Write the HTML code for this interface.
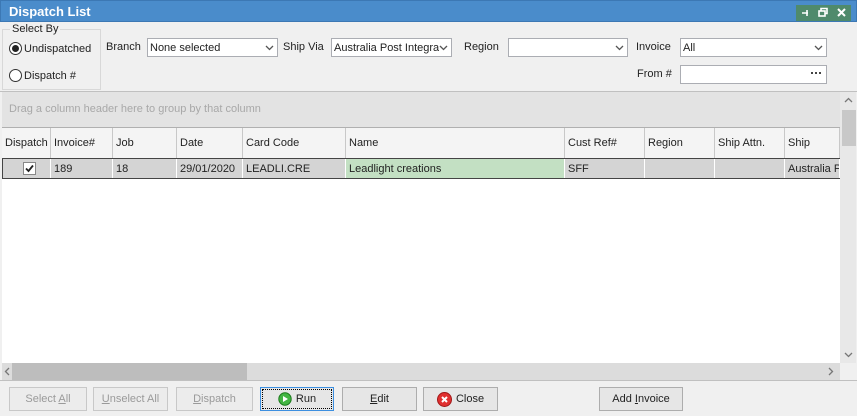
<!DOCTYPE html>
<html><head><style>
*{box-sizing:border-box;margin:0;padding:0}
body{width:857px;height:416px;overflow:hidden;background:#f0f0f0;font-family:"Liberation Sans",sans-serif;font-size:11px;color:#222;position:relative}
.a{position:absolute}
.title{left:0;top:0;width:857px;height:22px;background:#4a8ccb;color:#fff;font-weight:bold;font-size:13px;padding:3px 0 0 8px;border:1px solid #3c78b4}
.combo{background:#fff;border:1px solid #abadb3;height:19px;padding:3px 0 0 2px;white-space:nowrap;overflow:hidden}
.combo svg{position:absolute;right:3px;top:6px;background:#fff}
.btn{border:1px solid #adadad;background:#e6e6e6;height:24px;display:flex;align-items:center;justify-content:center;gap:4px;font-size:11px}
.dis{color:#9a9a9a;border-color:#c8c8c8;background:#ececec}
.hd{top:128px;height:31px;padding:9px 0 0 3px;border-right:1px solid #c8c8c8;background:#f4f4f4}
.cell{top:159px;height:19px;padding:4px 0 0 3px;border-right:1px solid #fff;background:#d4d4d4;white-space:nowrap;overflow:hidden}
</style></head><body>
<div class="a title">Dispatch List</div>
<div class="a" style="left:796px;top:5px;width:55px;height:16px;background:#4f8a6c"></div>
<svg class="a" style="left:796px;top:5px" width="55" height="16" fill="none" stroke="#fff" stroke-width="1.6">
<path d="M6 8h6M11 5v6"/><rect x="23" y="6" width="6" height="5"/><path d="M25 6V3.5h6v5h-2"/><path d="M42 4l7 7M49 4l-7 7" stroke-width="2"/></svg>

<div class="a" style="left:2px;top:29px;width:99px;height:61px;border:1px solid #d8d8d8"></div>
<div class="a" style="left:10px;top:23px;background:#f0f0f0;padding:0 2px">Select By</div>
<div class="a" style="left:9px;top:42px;width:13px;height:13px;border:1px solid #333;border-radius:50%;background:#fff"><div style="margin:2px;width:7px;height:7px;border-radius:50%;background:#222"></div></div>
<div class="a" style="left:24px;top:43px">Undispatched</div>
<div class="a" style="left:9px;top:69px;width:13px;height:13px;border:1px solid #333;border-radius:50%;background:#fff"></div>
<div class="a" style="left:24px;top:70px">Dispatch #</div>

<div class="a" style="left:106px;top:41px">Branch</div>
<div class="a combo" style="left:147px;top:38px;width:131px">None selected<svg width="9" height="6"><path d="M1 1l3.5 3.5L8 1" stroke="#555" fill="none" stroke-width="1.3"/></svg></div>
<div class="a" style="left:283px;top:41px">Ship Via</div>
<div class="a combo" style="left:331px;top:38px;width:121px">Australia Post Integra<svg width="9" height="6"><path d="M1 1l3.5 3.5L8 1" stroke="#555" fill="none" stroke-width="1.3"/></svg></div>
<div class="a" style="left:464px;top:41px">Region</div>
<div class="a combo" style="left:508px;top:38px;width:120px"><svg width="9" height="6"><path d="M1 1l3.5 3.5L8 1" stroke="#555" fill="none" stroke-width="1.3"/></svg></div>
<div class="a" style="left:636px;top:41px">Invoice</div>
<div class="a combo" style="left:680px;top:38px;width:147px">All<svg width="9" height="6"><path d="M1 1l3.5 3.5L8 1" stroke="#555" fill="none" stroke-width="1.3"/></svg></div>
<div class="a" style="left:637px;top:68px">From #</div>
<div class="a combo" style="left:680px;top:65px;width:147px"><span style="position:absolute;right:5px;top:6px;width:10px;height:2px;border-left:2px solid #444;border-right:2px solid #444"><span style="position:absolute;left:2px;width:2px;height:2px;background:#444"></span></span></div>

<div class="a" style="left:0;top:91px;width:857px;height:1px;background:#c0c0c0"></div>
<div class="a" style="left:2px;top:92px;width:838px;height:35px;background:#e3e3e3;color:#a8a8a8;padding:11px 0 0 7px">Drag a column header here to group by that column</div>
<div class="a" style="left:2px;top:127px;width:838px;height:1px;background:#b0b0b0"></div>
<div class="a" style="left:2px;top:128px;width:838px;height:235px;background:#fff"></div>

<div class="a hd" style="left:2px;width:49px">Dispatch</div>
<div class="a hd" style="left:51px;width:62px">Invoice#</div>
<div class="a hd" style="left:113px;width:64px">Job</div>
<div class="a hd" style="left:177px;width:66px">Date</div>
<div class="a hd" style="left:243px;width:103px">Card Code</div>
<div class="a hd" style="left:346px;width:219px">Name</div>
<div class="a hd" style="left:565px;width:80px">Cust Ref#</div>
<div class="a hd" style="left:645px;width:70px">Region</div>
<div class="a hd" style="left:715px;width:70px">Ship Attn.</div>
<div class="a hd" style="left:785px;width:55px">Ship</div>
<div class="a" style="left:2px;top:158px;width:838px;height:1px;background:#444"></div>
<div class="a cell" style="left:2px;width:49px;padding-top:3px"><div style="margin-left:18px;width:13px;height:13px;border:1px solid #888;background:#fff"><svg width="11" height="11"><path d="M2 5.5l2.5 2.5L9 2.5" stroke="#222" fill="none" stroke-width="1.8"/></svg></div></div>
<div class="a cell" style="left:51px;width:62px">189</div>
<div class="a cell" style="left:113px;width:64px">18</div>
<div class="a cell" style="left:177px;width:66px">29/01/2020</div>
<div class="a cell" style="left:243px;width:103px">LEADLI.CRE</div>
<div class="a cell" style="left:346px;width:219px;background:#c3e0c3">Leadlight creations</div>
<div class="a cell" style="left:565px;width:80px">SFF</div>
<div class="a cell" style="left:645px;width:70px"></div>
<div class="a cell" style="left:715px;width:70px"></div>
<div class="a cell" style="left:785px;width:55px">Australia P</div>
<div class="a" style="left:2px;top:178px;width:838px;height:1px;background:#444"></div>
<div class="a" style="left:2px;top:158px;width:1px;height:21px;background:#444"></div>

<div class="a" style="left:840px;top:92px;width:16px;height:271px;background:#e8e8e8"></div>
<div class="a" style="left:842px;top:110px;width:14px;height:36px;background:#c8c8c8"></div>
<svg class="a" style="left:844px;top:97px" width="9" height="6"><path d="M1 5l3.5-3.5L8 5" stroke="#777" fill="none" stroke-width="1.3"/></svg>
<svg class="a" style="left:844px;top:352px" width="9" height="6"><path d="M1 1l3.5 3.5L8 1" stroke="#777" fill="none" stroke-width="1.3"/></svg>
<div class="a" style="left:2px;top:363px;width:838px;height:17px;background:#dcdcdc"></div>
<div class="a" style="left:12px;top:363px;width:235px;height:17px;background:#bdbdbd"></div>
<svg class="a" style="left:4px;top:367px" width="6" height="9"><path d="M5 1L1.5 4.5 5 8" stroke="#777" fill="none" stroke-width="1.3"/></svg>
<svg class="a" style="left:828px;top:367px" width="6" height="9"><path d="M1 1l3.5 3.5L1 8" stroke="#777" fill="none" stroke-width="1.3"/></svg>
<div class="a" style="left:0;top:380px;width:857px;height:1px;background:#c0c0c0"></div>

<div class="a btn dis" style="left:9px;top:387px;width:78px"><span>Select <u>A</u>ll</span></div>
<div class="a btn dis" style="left:93px;top:387px;width:75px"><span><u>U</u>nselect All</span></div>
<div class="a btn dis" style="left:176px;top:387px;width:77px"><span><u>D</u>ispatch</span></div>
<div class="a btn" style="left:260px;top:387px;width:74px;border:1px solid #3c8fe0;outline:1px dotted #000;outline-offset:-3px"><svg width="14" height="14"><circle cx="7" cy="7" r="6.2" fill="#43b543" stroke="#1c7a1c"/><path d="M5 4v6l5-3z" fill="#fff"/></svg><span>Run</span></div>
<div class="a btn" style="left:342px;top:387px;width:75px"><span><u>E</u>dit</span></div>
<div class="a btn" style="left:423px;top:387px;width:75px"><svg width="15" height="15"><circle cx="7.5" cy="7.5" r="7" fill="#e03030" stroke="#a01818"/><path d="M5 5l5 5M10 5l-5 5" stroke="#fff" stroke-width="2"/></svg><span>Close</span></div>
<div class="a btn" style="left:599px;top:387px;width:84px"><span>Add <u>I</u>nvoice</span></div>
</body></html>
